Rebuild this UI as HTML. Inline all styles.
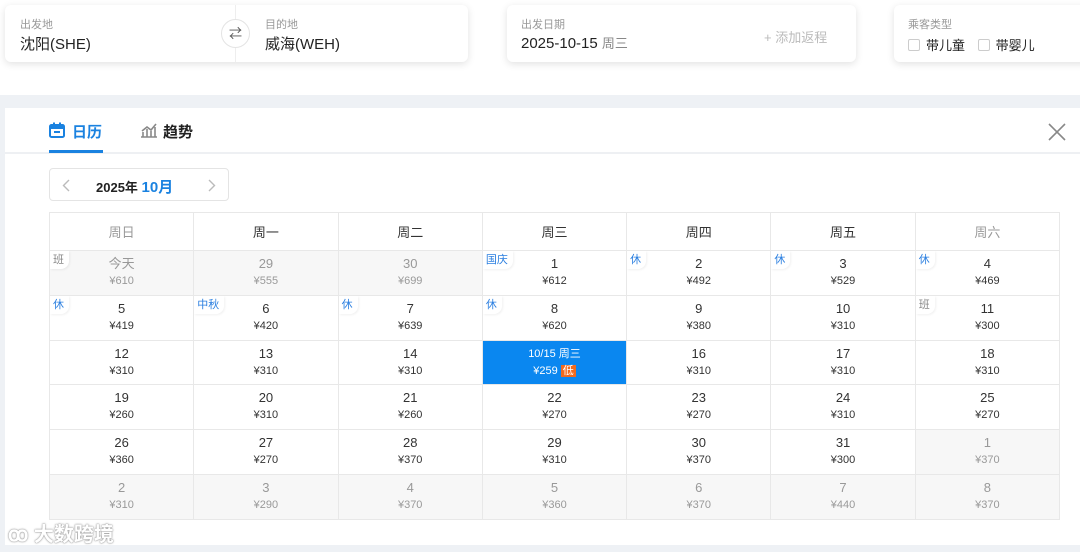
<!DOCTYPE html>
<html><head><meta charset="utf-8"><style>
*{margin:0;padding:0;box-sizing:border-box}
body{width:1080px;height:552px;background:#fff;font-family:"Liberation Sans","Noto Sans CJK SC",sans-serif;position:relative;overflow:hidden;color:#333}
.card{position:absolute;background:#fff;border-radius:6px;box-shadow:0 2px 8px rgba(0,0,0,.12)}
.lab{position:absolute;font-size:11px;color:#999}
.val{position:absolute;font-size:15px;color:#222}
.band{position:absolute;left:0;top:95px;width:1080px;height:457px;background:#eef1f5}
.panel{position:absolute;left:5px;top:108px;width:1075px;height:437px;background:#fff}
table{position:absolute;left:49px;top:212px;width:1011px;border-collapse:collapse;table-layout:fixed}
th,td{border:1px solid #e8e8e8;text-align:center;position:relative}
th{height:38px;font-weight:normal;font-size:13px;color:#333}
th.w{color:#999}
td{height:44.8px;font-size:13px;line-height:16px;padding-top:5px;vertical-align:top}
td i{display:block;font-style:normal;font-size:11px;line-height:14px;padding-top:2px}
td.g{background:#f7f7f7;color:#999}
td.s{background:#0a87f0;color:#fff;font-size:11px}
td.s b{font-weight:normal;background:#f06a1e;padding:0 2px;font-size:11px}
.t{position:absolute;left:0;top:0;font-size:11px;line-height:18px;color:#2b7fe0;background:#fff;padding:0 5px 0 3px;border-radius:0 0 8px 0;box-shadow:1px 1px 2px rgba(0,0,0,.06)}
.t.gy{color:#888}
</style></head><body>
<div class="card" style="left:5px;top:5px;width:463px;height:57px">
 <div class="lab" style="left:15px;top:11px">出发地</div>
 <div class="val" style="left:15px;top:28px">沈阳(SHE)</div>
 <div style="position:absolute;left:230px;top:0;width:1px;height:57px;background:#eee"></div>
 <div style="position:absolute;left:216px;top:14px;width:29px;height:29px;border-radius:50%;background:#fff;border:1px solid #e4e4e4;font-size:13px;text-align:center;line-height:27px;color:#555">⇄</div>
 <div class="lab" style="left:260px;top:11px">目的地</div>
 <div class="val" style="left:260px;top:28px">威海(WEH)</div>
</div>
<div class="card" style="left:507px;top:5px;width:349px;height:57px">
 <div class="lab" style="left:14px;top:11px">出发日期</div>
 <div class="val" style="left:14px;top:28px">2025-10-15 <span style="font-size:13px;color:#888">周三</span></div>
 <div style="position:absolute;left:257px;top:22px;font-size:13px;color:#bbb">+ 添加返程</div>
</div>
<div class="card" style="left:894px;top:5px;width:200px;height:57px">
 <div class="lab" style="left:14px;top:11px">乘客类型</div>
 <div style="position:absolute;left:14px;top:30px;font-size:13px;color:#222">
  <span style="display:inline-block;width:12px;height:12px;border:1px solid #ccc;border-radius:2px;vertical-align:-1px;margin-right:6px"></span>带儿童
  <span style="display:inline-block;width:12px;height:12px;border:1px solid #ccc;border-radius:2px;vertical-align:-1px;margin:0 6px 0 9px"></span>带婴儿
 </div>
</div>
<div class="band"></div>
<div class="panel"></div>
<div style="position:absolute;left:5px;top:152px;width:1075px;height:2px;background:#eef0f3"></div>
<div style="position:absolute;left:49px;top:150px;width:54px;height:3px;background:#1a82e0"></div>
<svg style="position:absolute;left:49px;top:122px" width="16" height="16" viewBox="0 0 16 16"><rect x="1" y="3" width="14" height="12" rx="1.5" fill="none" stroke="#1a82e0" stroke-width="2"/><rect x="1" y="3" width="14" height="4" fill="#1a82e0"/><rect x="4" y="0.5" width="2" height="4" fill="#1a82e0"/><rect x="10" y="0.5" width="2" height="4" fill="#1a82e0"/><rect x="5" y="9" width="6" height="2" fill="#1a82e0"/></svg>
<div style="position:absolute;left:72px;top:121px;font-size:15px;color:#1a82e0;font-weight:bold">日历</div>
<svg style="position:absolute;left:140px;top:122px" width="18" height="16" viewBox="0 0 18 16"><path d="M1 15H17M3 15V10M7 15V7M11 15V9M15 15V5M2 9L7 5L11 8L16 2" fill="none" stroke="#888" stroke-width="1.6"/></svg>
<div style="position:absolute;left:163px;top:121px;font-size:15px;color:#222;font-weight:bold">趋势</div>
<svg style="position:absolute;left:1047px;top:122px" width="20" height="20" viewBox="0 0 20 20"><path d="M2 2L18 18M18 2L2 18" stroke="#888" stroke-width="1.6"/></svg>
<div style="position:absolute;left:49px;top:168px;width:180px;height:33px;border:1px solid #e4e4e4;border-radius:4px">
 <svg style="position:absolute;left:12px;top:10px" width="8" height="13" viewBox="0 0 8 13"><path d="M7 1L1.5 6.5L7 12" fill="none" stroke="#bbb" stroke-width="1.4"/></svg>
 <span style="position:absolute;left:46px;top:7px;font-size:13px;font-weight:bold;color:#222">2025年 <span style="font-size:15px;color:#1a82e0">10月</span></span>
 <svg style="position:absolute;left:158px;top:10px" width="8" height="13" viewBox="0 0 8 13"><path d="M1 1L6.5 6.5L1 12" fill="none" stroke="#bbb" stroke-width="1.4"/></svg>
</div>
<table>
<tr><th class="w">周日</th><th>周一</th><th>周二</th><th>周三</th><th>周四</th><th>周五</th><th class="w">周六</th></tr>
<tr><td class="g"><span class="t gy">班</span>今天<i>¥610</i></td><td class="g">29<i>¥555</i></td><td class="g">30<i>¥699</i></td><td><span class="t">国庆</span>1<i>¥612</i></td><td><span class="t">休</span>2<i>¥492</i></td><td><span class="t">休</span>3<i>¥529</i></td><td><span class="t">休</span>4<i>¥469</i></td></tr>
<tr><td><span class="t">休</span>5<i>¥419</i></td><td><span class="t">中秋</span>6<i>¥420</i></td><td><span class="t">休</span>7<i>¥639</i></td><td><span class="t">休</span>8<i>¥620</i></td><td>9<i>¥380</i></td><td>10<i>¥310</i></td><td><span class="t gy">班</span>11<i>¥300</i></td></tr>
<tr><td>12<i>¥310</i></td><td>13<i>¥310</i></td><td>14<i>¥310</i></td><td class="s">10/15 周三<i>¥259 <b>低</b></i></td><td>16<i>¥310</i></td><td>17<i>¥310</i></td><td>18<i>¥310</i></td></tr>
<tr><td>19<i>¥260</i></td><td>20<i>¥310</i></td><td>21<i>¥260</i></td><td>22<i>¥270</i></td><td>23<i>¥270</i></td><td>24<i>¥310</i></td><td>25<i>¥270</i></td></tr>
<tr><td>26<i>¥360</i></td><td>27<i>¥270</i></td><td>28<i>¥370</i></td><td>29<i>¥310</i></td><td>30<i>¥370</i></td><td>31<i>¥300</i></td><td class="g">1<i>¥370</i></td></tr>
<tr><td class="g">2<i>¥310</i></td><td class="g">3<i>¥290</i></td><td class="g">4<i>¥370</i></td><td class="g">5<i>¥360</i></td><td class="g">6<i>¥370</i></td><td class="g">7<i>¥440</i></td><td class="g">8<i>¥370</i></td></tr>
</table>
<div style="position:absolute;left:8px;top:518px;font-size:20px;font-weight:bold;color:#fff;text-shadow:0 0 2px #999,0 0 1px #777">ꝏ 大数跨境</div>
</body></html>
